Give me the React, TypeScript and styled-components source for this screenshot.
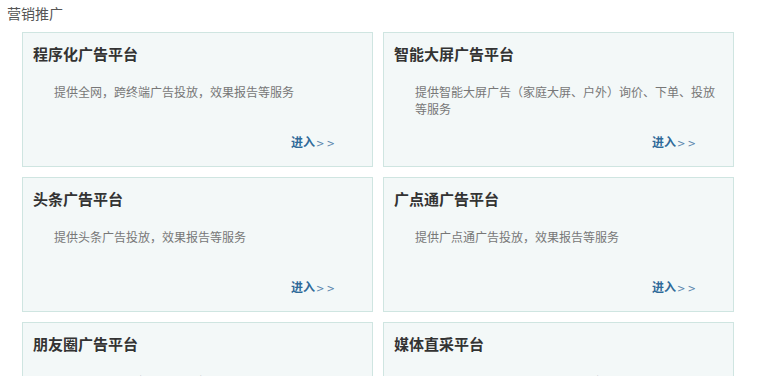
import React from "react";
import styled, { createGlobalStyle } from "styled-components";

const GlobalStyle = createGlobalStyle`
  html, body { margin: 0; padding: 0; background: #ffffff; }
  body { font-family: "Noto Sans CJK SC", "Noto Sans", sans-serif; }
`;

const Page = styled.div`
  width: 757px;
  height: 376px;
  overflow: hidden;
  background: #ffffff;
`;

const Heading = styled.div`
  padding: 3px 0 0 7px;
  height: 22px;
  font-size: 14px;
  line-height: 20px;
  color: #555555;
`;

const Grid = styled.div`
  display: grid;
  grid-template-columns: 351px 351px;
  column-gap: 10px;
  row-gap: 10px;
  padding: 7px 0 0 22px;
`;

const Card = styled.div`
  box-sizing: border-box;
  height: 135px;
  border: 1px solid #cfe5e1;
  background: #f3f8f8;
  padding: 10px 0 0 10px;
  display: flex;
  flex-direction: column;
`;

const Title = styled.div`
  font-size: 15px;
  font-weight: bold;
  line-height: 22px;
  color: #333333;
`;

const Desc = styled.div`
  margin: 18px 0 0 21px;
  width: 305px;
  height: 36px;
  font-size: 12px;
  line-height: 17px;
  color: #777777;
`;

const Enter = styled.a`
  align-self: flex-start;
  margin: 14px 0 0 258px;
  font-size: 12px;
  line-height: 18px;
  color: #2f6a99;
  text-decoration: none;
  font-weight: bold;
  cursor: pointer;
`;

const Arrows = styled.span`
  font-weight: normal;
  font-size: 10px;
  font-family: "DejaVu Sans", sans-serif;
  margin-left: 1px;
  letter-spacing: 2px;
  color: #5a86ad;
`;

const items = [
  { title: "程序化广告平台", desc: "提供全网，跨终端广告投放，效果报告等服务" },
  { title: "智能大屏广告平台", desc: "提供智能大屏广告（家庭大屏、户外）询价、下单、投放等服务" },
  { title: "头条广告平台", desc: "提供头条广告投放，效果报告等服务" },
  { title: "广点通广告平台", desc: "提供广点通广告投放，效果报告等服务" },
  { title: "朋友圈广告平台", desc: "提供朋友圈广告投放，效果报告等服务" },
  { title: "媒体直采平台", desc: "提供媒体资源直采，询价、下单、投放等服务" },
];

export default function App() {
  return (
    <Page>
      <GlobalStyle />
      <Heading>营销推广</Heading>
      <Grid>
        {items.map((it) => (
          <Card key={it.title}>
            <Title>{it.title}</Title>
            <Desc>{it.desc}</Desc>
            <Enter>
              进入<Arrows>&gt;&gt;</Arrows>
            </Enter>
          </Card>
        ))}
      </Grid>
    </Page>
  );
}
